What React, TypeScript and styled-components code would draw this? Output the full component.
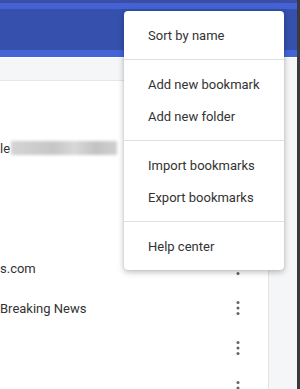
import styled, { createGlobalStyle } from "styled-components";

const GlobalStyle = createGlobalStyle`
    html, body {
        margin: 0;
        padding: 0;
        width: 300px;
        height: 389px;
        overflow: hidden;
        background: #fff;
        font-family: Roboto, "Liberation Sans", Arial, sans-serif;
    }
`;

type Row = { text?: string; blurred?: boolean };

const rows: Row[] = [
    {},
    { text: "le", blurred: true },
    {},
    {},
    { text: "s.com" },
    { text: "Breaking News" },
    {},
    {},
];

const menuGroups = [
    ["Sort by name"],
    ["Add new bookmark", "Add new folder"],
    ["Import bookmarks", "Export bookmarks"],
    ["Help center"],
];

const Kebab = () => (
    <KebabIcon width="4" height="16" viewBox="0 0 4 16">
        <circle cx="2" cy="2.5" r="1.5" />
        <circle cx="2" cy="8" r="1.5" />
        <circle cx="2" cy="13.5" r="1.5" />
    </KebabIcon>
);

const App = () => {
    return (
        <>
            <GlobalStyle />
            <Page>
                <Header>
                    <HeaderTop />
                    <HeaderMain />
                    <HeaderBottom />
                </Header>
                <Body>
                    <Panel>
                        <Toolbar />
                        <List>
                            {rows.map((row, i) => (
                                <ListRow key={i}>
                                    <RowText>
                                        {row.text}
                                        {row.blurred && <Blur />}
                                    </RowText>
                                    <Kebab />
                                </ListRow>
                            ))}
                        </List>
                    </Panel>
                    <Side />
                </Body>
                <Edge />
                <Menu>
                    {menuGroups.map((group, gi) => (
                        <MenuGroup key={gi} $first={gi === 0}>
                            {group.map((label) => (
                                <MenuItem key={label}>{label}</MenuItem>
                            ))}
                        </MenuGroup>
                    ))}
                </Menu>
            </Page>
        </>
    );
};

export default App;

const Page = styled.div`
    position: relative;
    width: 300px;
    height: 389px;
    overflow: hidden;
    display: flex;
    flex-direction: column;
`;

const Header = styled.div`
    height: 57px;
    display: flex;
    flex-direction: column;
    flex-shrink: 0;
`;

const HeaderTop = styled.div`
    height: 9px;
    background: linear-gradient(#3a4ea6 0, #3a4ea6 3px, #4462d4 3px);
`;

const HeaderMain = styled.div`
    flex: 1;
    background: #3550ad;
`;

const HeaderBottom = styled.div`
    height: 7px;
    background: #4264d6;
`;

const Body = styled.div`
    flex: 1;
    display: flex;
    border-top: 1px solid #fdfdfd;
`;

const Panel = styled.div`
    width: 268px;
    border-right: 1px solid #e2e3e6;
    display: flex;
    flex-direction: column;
    background: #fff;
`;

const Toolbar = styled.div`
    height: 22px;
    background: #f5f6f8;
    border-bottom: 1px solid #e6e6e8;
`;

const List = styled.div`
    padding-top: 7px;
    display: flex;
    flex-direction: column;
`;

const ListRow = styled.div`
    height: 40px;
    display: flex;
    align-items: center;
    justify-content: space-between;
    padding-right: 28px;
`;

const RowText = styled.div`
    display: flex;
    align-items: center;
    font-size: 13px;
    color: #333;
`;

const Blur = styled.span`
    display: inline-block;
    width: 106px;
    height: 14px;
    margin-left: 1px;
    background: linear-gradient(90deg, #d4d4d4, #c6c6c6 40%, #d8d8d8 60%, #c2c2c2 80%, #d0d0d0);
    filter: blur(1.5px);
`;

const KebabIcon = styled.svg`
    fill: #5f6368;
`;

const Side = styled.div`
    flex: 1;
    background: #f5f6f8;
`;

const Edge = styled.div`
    position: absolute;
    top: 0;
    right: 0;
    width: 3px;
    height: 100%;
    background: #3b3b3d;
`;

const Menu = styled.div`
    position: absolute;
    top: 11px;
    left: 124px;
    width: 160px;
    background: #fff;
    border-radius: 4px;
    box-shadow: 0 2px 6px rgba(0, 0, 0, 0.28), 0 0 1px rgba(0, 0, 0, 0.2);
`;

const MenuGroup = styled.div<{ $first: boolean }>`
    padding: 8px 0;
    border-top: ${(p) => (p.$first ? "none" : "1px solid #e0e0e0")};
`;

const MenuItem = styled.div`
    height: 32px;
    display: flex;
    align-items: center;
    padding-left: 24px;
    font-size: 13px;
    color: #333;
    white-space: nowrap;
`;
